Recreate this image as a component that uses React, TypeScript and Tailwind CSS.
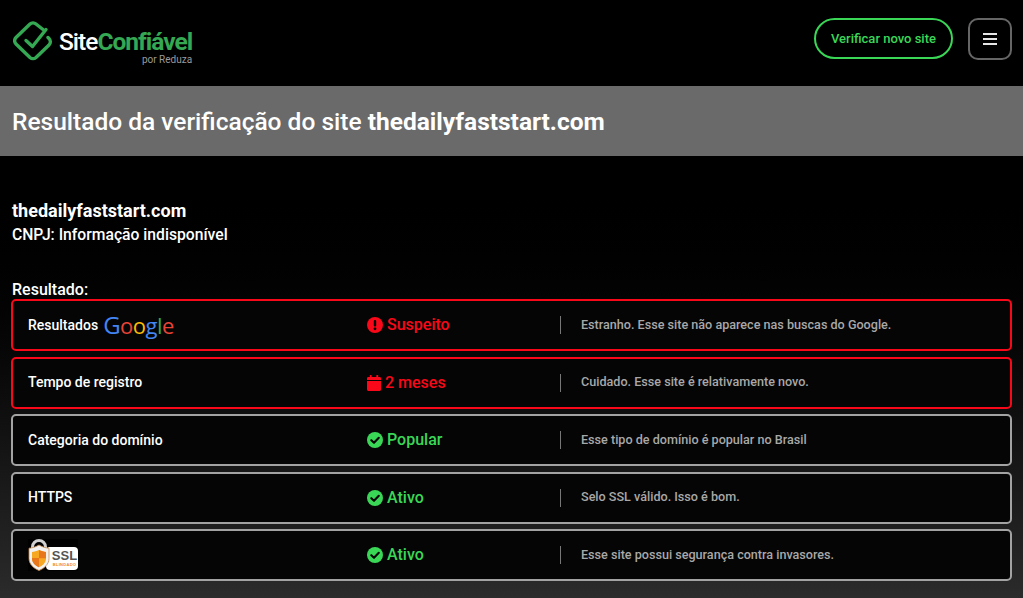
import { ReactNode } from 'react';

const FONT = '[font-family:Roboto,"Noto_Sans",sans-serif]';

const LogoIcon = () => (
  <svg width="40" height="40" viewBox="0 0 40 40" fill="none" stroke="#34a853" strokeLinecap="round" strokeLinejoin="round">
    <path d="M30 8.500 23 3a4.500 4.500 0 0 0-6 0L3 16.500a4.500 4.500 0 0 0 0 6.500l14 13.500a4.500 4.500 0 0 0 6 0L36 24a4.500 4.500 0 0 0 0-6.500l-1-1" strokeWidth="3.400" />
    <path d="M13 19.500 19.500 25.500 33 8.500" strokeWidth="3.400" />
  </svg>
);

const AlertIcon = () => (
  <svg width="16" height="16" viewBox="0 0 16 16">
    <circle cx="8" cy="8" r="8" fill="#f80818" />
    <rect x="6.800" y="3" width="2.400" height="6.400" rx="1" fill="#050505" />
    <circle cx="8" cy="11.800" r="1.400" fill="#050505" />
  </svg>
);

const CalendarIcon = () => (
  <svg width="14" height="16" viewBox="0 0 15 16" fill="#f80818" preserveAspectRatio="none">
    <rect x="3" y="0" width="2" height="3.500" rx="0.600" />
    <rect x="10" y="0" width="2" height="3.500" rx="0.600" />
    <path d="M1.400 2h12.200c.8 0 1.400.6 1.400 1.400V5H0V3.400C0 2.600.6 2 1.400 2Z" />
    <path d="M0 6h15v8.600c0 .8-.6 1.400-1.400 1.400H1.400C.6 16 0 15.400 0 14.600V6Z" />
  </svg>
);

const CheckIcon = () => (
  <svg width="16" height="16" viewBox="0 0 16 16" fill="none">
    <circle cx="8" cy="8" r="8" fill="#3ad757" />
    <path d="M4.300 8.200 7 10.800l4.800-5" stroke="#050505" strokeWidth="2.100" strokeLinecap="round" strokeLinejoin="round" />
  </svg>
);

const GoogleLogo = () => (
  <span className="text-[22px] leading-none tracking-[-0.5px] [font-family:'Open_Sans',sans-serif] font-medium">
    <span className="text-[#4285f4] text-[24px]">G</span>
    <span className="text-[#ea4335]">o</span>
    <span className="text-[#fbbc05]">o</span>
    <span className="text-[#4285f4]">g</span>
    <span className="text-[#34a853]">l</span>
    <span className="text-[#ea4335]">e</span>
  </span>
);

const SslBadge = () => (
  <div className="relative w-[50px] h-[32px] bg-black">
    <div className="absolute left-[18px] top-[8px] w-[32px] h-[23px] bg-white rounded-[4px] flex flex-col items-center justify-center pl-[5px]">
      <span className="text-[#555] text-[13px] font-bold leading-[12px] [font-family:'Liberation_Sans',sans-serif]">SSL</span>
      <span className="text-[#f28c1e] text-[4px] font-bold leading-[5px] tracking-[0.3px] [font-family:'Liberation_Sans',sans-serif]">BLINDADO</span>
    </div>
    <svg className="absolute left-0 top-0" width="22" height="32" viewBox="0 0 22 32" fill="none">
      <path d="M4.500 14V8a6.500 6.500 0 0 1 13 0v6" stroke="#d0d0d0" strokeWidth="3" />
      <path d="M11 6c3.400 2 6.800 3 10 3.200v10.300c0 5.500-4.500 9.800-10 12-5.500-2.200-10-6.500-10-12V9.200C4.200 9 7.600 8 11 6Z" fill="#f1f1f1" stroke="#c98a4a" strokeWidth="0.800" />
      <path d="M11 11c2.400 1.200 4.700 1.700 7 1.900v6.500c0 4-3 7-7 8.800-4-1.800-7-4.800-7-8.800v-6.500c2.300-.2 4.600-.7 7-1.900Z" fill="#f7a823" />
      <path d="M11 11v8H4v.4c0 4 3 7 7 8.800v-9h7v-6.300c-2.300-.2-4.600-.7-7-1.900Z" fill="#e8761a" />
    </svg>
  </div>
);

interface RowProps {
  label: ReactNode;
  icon: ReactNode;
  status: string;
  text: string;
  danger?: boolean;
}

const Row = ({ label, icon, status, text, danger }: RowProps) => (
  <div
    className={`h-[52px] flex items-center rounded-[5px] border-2 bg-[#050505] pl-[15px] ${
      danger ? 'border-[#f80818]' : 'border-[#a3a3a3]'
    }`}
  >
    <div className="w-[339px] flex items-center gap-[5px] text-[14px] font-medium text-white">{label}</div>
    <div className={`w-[193px] flex items-center gap-[4px] text-[16px] font-medium ${danger ? 'text-[#f80818]' : 'text-[#3ad757]'}`}>
      {icon}
      <span>{status}</span>
    </div>
    <div className="h-[18px] w-px bg-[#777]" />
    <div className="pl-[20px] text-[12.600px] font-medium text-[#a8a8a8]">{text}</div>
  </div>
);

export default function App() {
  return (
    <div className={`${FONT} h-[598px] overflow-hidden bg-black text-white`}>
      <header className="h-[86px] flex items-center justify-between pl-[13px] pr-[11px] pb-[9px]">
        <div className="flex items-center gap-[6px] mt-[5px]">
          <LogoIcon />
          <div className="flex flex-col items-end mt-[14px]">
            <div className="text-[24.500px] leading-[24px] tracking-[-1px] font-medium">
              <span className="text-white">Site</span>
              <span className="text-[#34a853] font-bold">Confiável</span>
            </div>
            <span className="text-[10px] leading-[12px] text-[#9a9a9a]">por Reduza</span>
          </div>
        </div>
        <div className="flex items-center gap-[15px]">
          <button className="h-[41px] w-[139px] rounded-full border-2 border-[#3ad757] text-[#3ad757] text-[13px] font-medium">
            Verificar novo site
          </button>
          <button className="h-[42px] w-[44px] rounded-[10px] border-2 border-[#666] flex flex-col items-center justify-center gap-[3px]">
            <span className="block w-[14px] h-[2px] bg-[#e5e5e5]" />
            <span className="block w-[14px] h-[2px] bg-[#e5e5e5]" />
            <span className="block w-[14px] h-[2px] bg-[#e5e5e5]" />
          </button>
        </div>
      </header>

      <div className="h-[70px] bg-[#6a6a6a] flex items-center pl-[12px] pt-[2px] text-[24.500px] font-medium">
        <span>
          Resultado da verificação do site <span className="font-bold">thedailyfaststart.com</span>
        </span>
      </div>

      <main className="h-[442px] bg-gradient-to-b from-black to-[#2b2b2b] px-[11px] pt-[44px]">
        <div className="pl-px">
          <h2 className="text-[18px] leading-[22px] font-bold">thedailyfaststart.com</h2>
          <p className="text-[15.700px] leading-[26px] font-medium">CNPJ: Informação indisponível</p>
        </div>
        <p className="pl-px mt-[32px] text-[16px] leading-[19px] font-medium">Resultado:</p>
        <div className="flex flex-col gap-[5.500px]">
          <Row
            danger
            label={
              <>
                <span>Resultados</span>
                <GoogleLogo />
              </>
            }
            icon={<AlertIcon />}
            status="Suspeito"
            text="Estranho. Esse site não aparece nas buscas do Google."
          />
          <Row
            danger
            label="Tempo de registro"
            icon={<CalendarIcon />}
            status="2 meses"
            text="Cuidado. Esse site é relativamente novo."
          />
          <Row
            label="Categoria do domínio"
            icon={<CheckIcon />}
            status="Popular"
            text="Esse tipo de domínio é popular no Brasil"
          />
          <Row label="HTTPS" icon={<CheckIcon />} status="Ativo" text="Selo SSL válido. Isso é bom." />
          <Row
            label={<SslBadge />}
            icon={<CheckIcon />}
            status="Ativo"
            text="Esse site possui segurança contra invasores."
          />
        </div>
      </main>
    </div>
  );
}
